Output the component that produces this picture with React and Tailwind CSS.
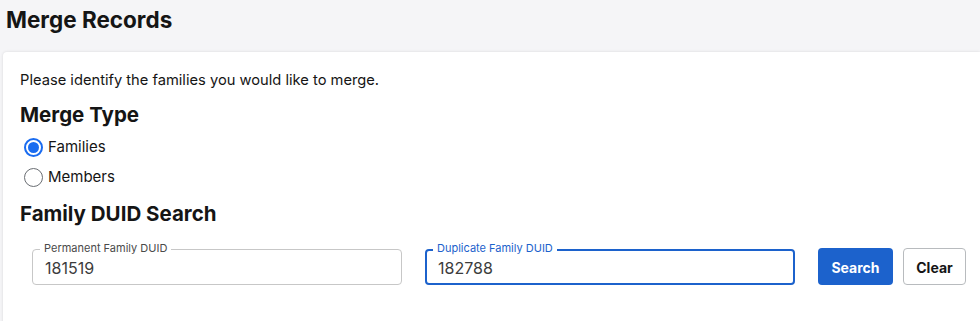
import { useState } from "react";

const font = { fontFamily: "Inter, 'Noto Sans', sans-serif" };

const Radio = ({ checked, label, onChange }) => (
  <label className="flex items-center gap-[5px] h-[30px] cursor-pointer">
    <span
      className={
        checked
          ? "w-[19px] h-[19px] rounded-full border-2 border-[#1a6cf0] flex items-center justify-center"
          : "w-[19px] h-[19px] rounded-full border border-[#6a6e73] flex items-center justify-center"
      }
      onClick={onChange}
    >
      {checked && <span className="w-[11px] h-[11px] rounded-full bg-[#1a6cf0]" />}
    </span>
    <span className="text-[15px] text-[#151515]" onClick={onChange}>
      {label}
    </span>
  </label>
);

const Field = ({ label, value, focused }) => (
  <div className="relative flex-1">
    <div
      className={
        focused
          ? "h-[36px] rounded-[4px] border-2 border-[#1c62cc] flex items-center px-[11px]"
          : "h-[36px] rounded-[4px] border border-[#c7c7c7] flex items-center px-[12px]"
      }
    >
      <span className="text-[16px] text-[#3c3c3c] pt-[2px]">{value}</span>
    </div>
    <span
      className={
        focused
          ? "absolute left-[8px] top-[-8px] bg-white px-[4px] text-[11px] leading-[14px] text-[#1c62cc]"
          : "absolute left-[8px] top-[-8px] bg-white px-[4px] text-[11px] leading-[14px] text-[#4a4a4a]"
      }
    >
      {label}
    </span>
  </div>
);

const App = () => {
  const [type, setType] = useState("families");

  return (
    <div className="w-[980px] h-[321px] bg-[#f5f5f7] overflow-hidden" style={font}>
      {/* HEADER */}
      <h1 className="pl-[6px] pt-[6px] h-[52px] text-[22.5px] font-bold text-[#151515] leading-[28px]">
        Merge Records
      </h1>

      {/* CARD */}
      <div className="ml-[3px] bg-white rounded-tl-[4px] shadow-[0_0_3px_rgba(0,0,0,0.12)] h-[280px] pl-[17px] pt-[18px]">
        <p className="text-[14.7px] text-[#151515] leading-[20px]">
          Please identify the families you would like to merge.
        </p>

        <h2 className="mt-[12px] text-[20.5px] font-bold text-[#151515] leading-[26px]">Merge Type</h2>

        <div className="pl-[4px] mt-[4px]">
          <Radio checked={type === "families"} label="Families" onChange={() => setType("families")} />
          <Radio checked={type === "members"} label="Members" onChange={() => setType("members")} />
        </div>

        <h2 className="mt-[9px] text-[20.5px] font-bold text-[#151515] leading-[26px]">Family DUID Search</h2>

        <div className="flex items-center mt-[21px] pl-[12px]">
          <div className="w-[370px] flex">
            <Field label="Permanent Family DUID" value="181519" />
          </div>
          <div className="w-[370px] flex ml-[23px]">
            <Field label="Duplicate Family DUID" value="182788" focused />
          </div>
          <button className="ml-[23px] h-[37px] w-[75px] rounded-[4px] bg-[#1c62cc] text-white text-[14px] font-bold pt-[2px]">
            Search
          </button>
          <button className="ml-[10px] h-[37px] w-[63px] rounded-[4px] border border-[#b8bbbe] bg-white text-[#151515] text-[14px] font-bold pt-[2px]">
            Clear
          </button>
        </div>
      </div>
    </div>
  );
};

export default App;
